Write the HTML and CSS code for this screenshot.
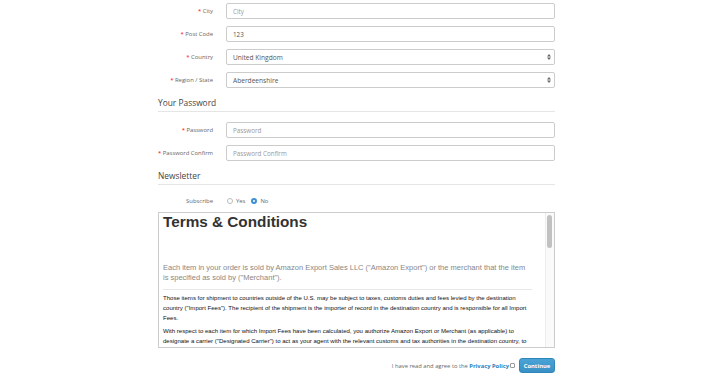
FILE: index.html
```html
<!DOCTYPE html>
<html>
  <head>
    <title>Checkout - Register</title>
    <meta charset="UTF-8" />
    <link rel="stylesheet" href="styles.css">
  </head>
  <body>
    <div id="content">

      <!-- Address -->
      <fieldset class="group">
        <div class="form_row">
          <label class="req">City</label>
          <input class="field" type="text" placeholder="City">
        </div>
        <div class="form_row">
          <label class="req">Post Code</label>
          <input class="field" type="text" value="123">
        </div>
        <div class="form_row">
          <label class="req">Country</label>
          <div class="select_wrap">
            <div class="field select">United Kingdom</div>
            <svg class="arrows" width="4" height="6" viewBox="0 0 4 6"><path d="M0 2.4 L2 0 L4 2.4 Z M0 3.6 L2 6 L4 3.6 Z" fill="#666"/></svg>
          </div>
        </div>
        <div class="form_row">
          <label class="req">Region / State</label>
          <div class="select_wrap">
            <div class="field select">Aberdeenshire</div>
            <svg class="arrows" width="4" height="6" viewBox="0 0 4 6"><path d="M0 2.4 L2 0 L4 2.4 Z M0 3.6 L2 6 L4 3.6 Z" fill="#666"/></svg>
          </div>
        </div>
      </fieldset>

      <!-- Password -->
      <fieldset class="group">
        <div class="legend">Your Password</div>
        <div class="form_row">
          <label class="req">Password</label>
          <input class="field" type="password" placeholder="Password">
        </div>
        <div class="form_row">
          <label class="req">Password Confirm</label>
          <input class="field" type="password" placeholder="Password Confirm">
        </div>
      </fieldset>

      <!-- Newsletter -->
      <fieldset class="group">
        <div class="legend short">Newsletter</div>
        <div class="form_row">
          <label>Subscribe</label>
          <div class="radios">
            <span class="radio"></span> Yes
            <span class="radio checked"></span> No
          </div>
        </div>
      </fieldset>

      <!-- Terms -->
      <div class="terms">
        <div class="terms_inner">
          <h2>Terms &amp; Conditions</h2>
          <p class="lead">Each item in your order is sold by Amazon Export Sales LLC ("Amazon Export") or the merchant that the item is specified as sold by ("Merchant").</p>
          <hr>
          <p>Those items for shipment to countries outside of the U.S. may be subject to taxes, customs duties and fees levied by the destination country ("Import Fees"). The recipient of the shipment is the importer of record in the destination country and is responsible for all Import Fees.</p>
          <p>With respect to each item for which Import Fees have been calculated, you authorize Amazon Export or Merchant (as applicable) to designate a carrier ("Designated Carrier") to act as your agent with the relevant customs and tax authorities in the destination country, to clear the merchandise, process and remit the actual Import Fees.</p>
        </div>
        <div class="scroll_track"><div class="scroll_thumb"></div></div>
      </div>

      <div class="buttons">
        <span class="agree">I have read and agree to the <a href="#">Privacy Policy</a></span>
        <span class="check"></span>
        <button class="btn">Continue</button>
      </div>

    </div>
  </body>
</html>
```

FILE: styles.css
```css
body {
  margin: 0;
  background: #fff;
  font-family: "Open Sans", "Liberation Sans", sans-serif;
  color: #666;
}

#content {
  width: 397px;
  margin: 3px 0 0 158px;
}

.group {
  border: none;
  margin: 0;
  padding: 0;
  min-width: 0;
}

.legend {
  font-size: 8.4px;
  line-height: 12px;
  color: #444;
  padding-bottom: 2px;
  border-bottom: 1px solid #e5e5e5;
  margin-top: 2px;
  margin-bottom: 10px;
}
.legend.short {
  margin-bottom: 8px;
}

.form_row {
  display: grid;
  grid-template-columns: 55px 1fr;
  column-gap: 13px;
  align-items: center;
  height: 16px;
  margin-bottom: 7px;
}

.form_row label {
  text-align: right;
  white-space: nowrap;
  font-size: 5.9px;
  color: #666;
}

.form_row label.req:before {
  content: "* ";
  color: #f00;
}

.field {
  box-sizing: border-box;
  height: 16px;
  width: 100%;
  border: 1px solid #ccc;
  border-radius: 2px;
  padding: 0 6px;
  font-family: "Open Sans", "Liberation Sans", sans-serif;
  font-size: 6.3px;
  color: #555;
  outline: none;
  background: #fff;
}
.field::placeholder {
  color: #999;
}

.select_wrap {
  position: relative;
}
.select {
  display: flex;
  align-items: center;
  font-size: 6.6px;
}
.arrows {
  position: absolute;
  right: 4px;
  top: 5px;
}

.radios {
  height: 16px;
  display: flex;
  align-items: center;
  font-size: 5.9px;
  color: #666;
}
.radio {
  box-sizing: border-box;
  width: 6px;
  height: 6px;
  border: 1px solid #bbb;
  border-radius: 50%;
  margin: 0 3px 0 1px;
  background: #fff;
}
.radio.checked {
  border: 2px solid #3d8fd6;
  background: #fff;
  margin-left: 6px;
}

/* Terms box */
.terms {
  position: relative;
  height: 134px;
  margin-top: -4px;
  border: 1px solid #ccc;
  overflow: hidden;
  font-family: "Liberation Sans", Arial, sans-serif;
}
.terms_inner {
  padding: 0 25px 0 4px;
}
.terms h2 {
  margin: 0;
  font-size: 15.3px;
  line-height: 18px;
  font-weight: bold;
  color: #333;
}
.terms p {
  margin: 3px 0 0 0;
  font-size: 6.05px;
  line-height: 10px;
  color: #111;
}
.terms p.lead {
  margin: 32px 0 0 0;
  font-size: 7.5px;
  line-height: 10px;
  color: #888;
}
.terms hr {
  border: none;
  border-top: 1px solid #e8e8e8;
  margin: 6px -3px 3px 0;
}
.scroll_track {
  position: absolute;
  top: 0;
  right: 0;
  bottom: 0;
  width: 8px;
  border-left: 1px solid #ededed;
  background: #fafafa;
}
.scroll_thumb {
  margin: 2px 0 0 1px;
  width: 5px;
  height: 33px;
  border-radius: 3px;
  background: #c1c1c1;
}

/* Footer buttons */
.buttons {
  display: flex;
  justify-content: flex-end;
  align-items: center;
  margin-top: 10px;
}
.agree {
  font-size: 5.8px;
  color: #666;
}
.agree a {
  color: #2f7dbd;
  font-weight: bold;
  text-decoration: none;
}
.check {
  box-sizing: border-box;
  width: 5px;
  height: 5px;
  border: 1px solid #999;
  border-radius: 1px;
  margin: 0 4px 0 1px;
}
.btn {
  width: 36px;
  height: 15px;
  padding: 0;
  border: 1px solid #2f86b8;
  border-radius: 3px;
  background: linear-gradient(#4aa3d6, #3990c4);
  color: #fff;
  font-family: "Open Sans", "Liberation Sans", sans-serif;
  font-size: 5.8px;
  font-weight: bold;
}
```
